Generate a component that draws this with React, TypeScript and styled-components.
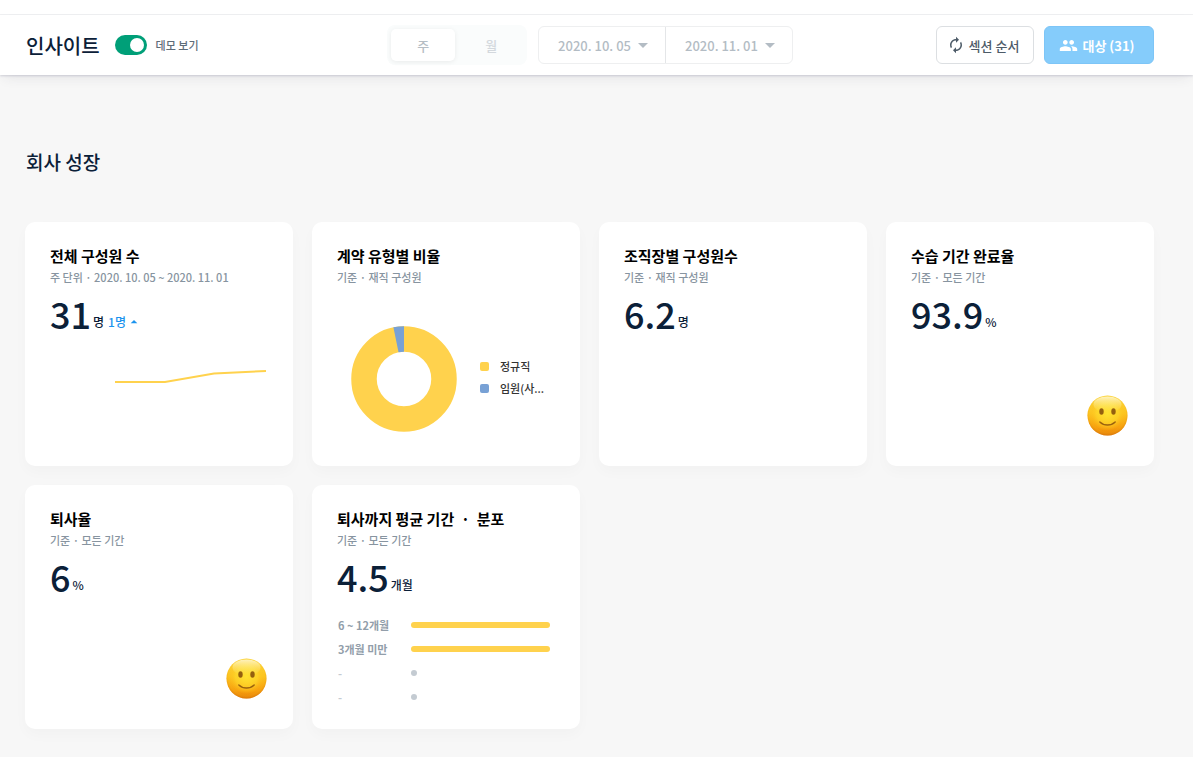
import React from 'react';
import styled, { createGlobalStyle } from 'styled-components';
import { MdArrowDropDown, MdArrowDropUp, MdAutorenew, MdPeople } from 'react-icons/md';

const GlobalStyle = createGlobalStyle`
  *, *::before, *::after { box-sizing: border-box; }
  html { background: #f7f7f7; }
  body {
    margin: 0;
    color: #0b2038;
    font-family: 'Noto Sans CJK KR', 'Noto Sans', sans-serif;
    font-weight: 500;
  }
  button { font: inherit; cursor: pointer; }
  h1, h2, h3, p, ul, dl, dd { margin: 0; padding: 0; font-weight: 500; }
`;

const TopStrip = styled.div`
  height: 15px;
  background: #fff;
  border-bottom: 1px solid #f1f2f3;
`;

const Header = styled.header`
  display: grid;
  grid-template-columns: 1fr auto 1fr;
  align-items: center;
  height: 60px;
  padding: 0 39px 0 26px;
  background: #fff;
  box-shadow: 0 1px 2px rgba(50, 50, 93, 0.18), 0 6px 12px -4px rgba(50, 50, 70, 0.1);
`;

const HeaderStart = styled.div`
  display: flex;
  align-items: center;
  gap: 15px;
`;

const PageTitle = styled.h1`
  padding-top: 2px;
  font-size: 20px;
  line-height: 30px;
`;

const SwitchLabel = styled.label`
  display: flex;
  align-items: center;
  gap: 9px;
  color: #5f6c78;
  font-size: 11px;
  line-height: 16px;
  cursor: pointer;
`;

const Switch = styled.input`
  appearance: none;
  display: flex;
  justify-content: flex-end;
  align-items: center;
  width: 32px;
  height: 20px;
  margin: 0;
  padding: 0 3px;
  border-radius: 10px;
  background: #009f78;

  &::before {
    content: '';
    width: 14px;
    height: 14px;
    border-radius: 50%;
    background: #fff;
  }

  &:not(:checked) {
    justify-content: flex-start;
    background: #c3cad1;
  }
`;

const Filters = styled.div`
  display: flex;
  align-items: center;
  gap: 11px;
`;

const Segments = styled.div`
  display: flex;
  gap: 4px;
  padding: 4px;
  border-radius: 8px;
  background: #fafcfc;
`;

const Segment = styled.button<{ $active?: boolean }>`
  width: 64px;
  height: 32px;
  padding: 0;
  border: 0;
  border-radius: 5px;
  background: ${(p) => (p.$active ? '#fff' : 'transparent')};
  box-shadow: ${(p) => (p.$active ? '0 1px 5px rgba(0, 0, 0, 0.07)' : 'none')};
  color: ${(p) => (p.$active ? '#b5bdc4' : '#d3d8dd')};
  font-size: 13px;
`;

const DateRange = styled.div`
  display: flex;
  height: 38px;
  border: 1px solid #eeeff0;
  border-radius: 6px;
`;

const DateButton = styled.button`
  display: flex;
  align-items: center;
  padding: 0 10px 0 19px;
  border: 0;
  background: none;
  color: #b3bcc4;
  font-size: 13px;

  & + & { border-left: 1px solid #e4e6e8; }
`;

const HeaderEnd = styled.div`
  display: flex;
  justify-content: flex-end;
  gap: 10px;
`;

const ActionButton = styled.button<{ $primary?: boolean }>`
  display: flex;
  align-items: center;
  justify-content: center;
  gap: 4px;
  width: ${(p) => (p.$primary ? 110 : 98)}px;
  height: 38px;
  padding: 0 4px 0 0;
  border: 1px solid ${(p) => (p.$primary ? '#7dc5f7' : '#dcdfe2')};
  border-radius: 6px;
  background: ${(p) => (p.$primary ? '#85ccfb' : '#fff')};
  color: ${(p) => (p.$primary ? '#fff' : '#4d5b68')};
  font-size: 13px;
  font-weight: ${(p) => (p.$primary ? 700 : 500)};
`;

const Main = styled.main`
  padding: 72px 39px 28px 25px;
`;

const SectionTitle = styled.h2`
  margin-bottom: 45px;
  padding-left: 1px;
  font-size: 19px;
  line-height: 30px;
`;

const CardGrid = styled.div`
  display: grid;
  grid-template-columns: repeat(4, minmax(0, 1fr));
  gap: 19px;
`;

const CardBox = styled.article`
  display: flex;
  flex-direction: column;
  min-height: 244px;
  padding: 24px 24px 24px 25px;
  border-radius: 10px;
  background: #fff;
  box-shadow: 0 6px 14px rgba(0, 0, 0, 0.025);
`;

const CardTitle = styled.h3`
  color: #000;
  font-size: 15px;
  font-weight: 700;
  line-height: 20px;
  white-space: pre;
`;

const CardCaption = styled.p`
  margin-top: 3px;
  color: #8794a0;
  font-size: 11px;
  line-height: 16px;
`;

const Figure = styled.p`
  display: flex;
  align-items: flex-end;
  margin-top: 8px;
  font-size: 36px;
  line-height: 40px;
`;

const Unit = styled.span`
  margin-left: 2px;
  padding-bottom: 3px;
  font-size: 12px;
  line-height: 16px;
`;

const Delta = styled.span`
  display: inline-flex;
  align-items: center;
  margin-left: 4px;
  padding-bottom: 3px;
  color: #1b93ee;
  font-size: 12px;
  line-height: 16px;
`;

const TrendChart = styled.svg`
  align-self: flex-end;
  width: 156px;
  height: 24px;
  margin-top: 33px;
`;

const DonutRow = styled.div`
  display: flex;
  align-items: center;
  gap: 23px;
  margin-top: 41px;
  padding-left: 14px;
`;

const Legend = styled.ul`
  flex: 1;
  min-width: 0;
  padding-bottom: 4px;
  list-style: none;
`;

const LegendItem = styled.li<{ $color: string }>`
  display: flex;
  align-items: center;
  gap: 11px;
  color: #333;
  font-size: 11px;
  line-height: 22px;

  &::before {
    content: '';
    flex: none;
    width: 9px;
    height: 9px;
    border-radius: 2px;
    background: ${(p) => p.$color};
  }
`;

const FaceSlot = styled.div`
  display: flex;
  justify-content: flex-end;
  margin-top: auto;
  padding: 0 2px 6px 0;
`;

const Distribution = styled.dl`
  display: flex;
  flex-direction: column;
  gap: 8px;
  margin-top: 21px;
  padding: 0 6px 0 1px;
`;

const DistributionRow = styled.div<{ $empty: boolean }>`
  display: grid;
  grid-template-columns: 73px 1fr;
  align-items: center;
  color: ${(p) => (p.$empty ? '#c4cbd2' : '#929eaa')};
  font-size: 11px;
  font-weight: 700;
  line-height: 16px;
`;

const Bar = styled.dd<{ $empty: boolean }>`
  width: ${(p) => (p.$empty ? '6px' : '100%')};
  height: 6px;
  border-radius: 3px;
  background: ${(p) => (p.$empty ? '#c4cbd2' : '#ffd24d')};
`;

function SmilingFace({ id }: { id: string }) {
  return (
    <svg width="41" height="41" viewBox="0 0 41 41" role="img" aria-label="좋음">
      <defs>
        <linearGradient id={`${id}-base`} x1="0" y1="0" x2="0" y2="1">
          <stop offset="0" stopColor="#fbd53c" />
          <stop offset="0.45" stopColor="#fcc41f" />
          <stop offset="0.8" stopColor="#f7a00e" />
          <stop offset="1" stopColor="#e67f08" />
        </linearGradient>
        <radialGradient id={`${id}-glow`} cx="0.5" cy="0.45" r="0.55">
          <stop offset="0" stopColor="#ffe432" stopOpacity="0.95" />
          <stop offset="0.5" stopColor="#ffdc2d" stopOpacity="0.6" />
          <stop offset="0.8" stopColor="#ffbf1b" stopOpacity="0" />
          <stop offset="1" stopColor="#d27008" stopOpacity="0.6" />
        </radialGradient>
        <linearGradient id={`${id}-shine`} x1="0" y1="0" x2="0" y2="1">
          <stop offset="0" stopColor="#fff8d8" stopOpacity="0.85" />
          <stop offset="1" stopColor="#fff176" stopOpacity="0" />
        </linearGradient>
      </defs>
      <circle cx="20.500" cy="20.500" r="20" fill={`url(#${id}-base)`} />
      <circle cx="20.500" cy="20.500" r="20" fill={`url(#${id}-glow)`} />
      <ellipse cx="20.500" cy="9.500" rx="14" ry="8" fill={`url(#${id}-shine)`} />
      <ellipse cx="14.500" cy="16.500" rx="2.200" ry="3.300" fill="#94600f" />
      <ellipse cx="26.500" cy="16.500" rx="2.200" ry="3.300" fill="#94600f" />
      <path d="M12.800 27C17 31 24 31 28.200 27" fill="none" stroke="#9a620f" strokeWidth="1.400" strokeLinecap="round" />
    </svg>
  );
}

function Donut() {
  return (
    <svg width="106" height="106" viewBox="0 0 106 106" role="img" aria-label="계약 유형별 비율">
      <circle cx="53" cy="53" r="40" fill="none" stroke="#ffd24d" strokeWidth="25.500" />
      <circle
        cx="53"
        cy="53"
        r="40"
        fill="none"
        stroke="#78a1d5"
        strokeWidth="25.500"
        pathLength="31"
        strokeDasharray="1 30"
        strokeDashoffset="1"
        transform="rotate(-90 53 53)"
      />
    </svg>
  );
}

interface CardProps {
  title: string;
  caption: string;
  value?: string;
  unit?: string;
  delta?: string;
  children?: React.ReactNode;
}

function Card({ title, caption, value, unit, delta, children }: CardProps) {
  return (
    <CardBox>
      <CardTitle>{title}</CardTitle>
      <CardCaption>{caption}</CardCaption>
      {value && (
        <Figure>
          {value}
          <Unit>{unit}</Unit>
          {delta && (
            <Delta>
              {delta}
              <MdArrowDropUp size={16} />
            </Delta>
          )}
        </Figure>
      )}
      {children}
    </CardBox>
  );
}

const distribution = ['6 ~ 12개월', '3개월 미만', '-', '-'];

export default function App() {
  return (
    <>
      <GlobalStyle />
      <TopStrip />
      <Header>
        <HeaderStart>
          <PageTitle>인사이트</PageTitle>
          <SwitchLabel>
            <Switch type="checkbox" role="switch" defaultChecked />
            데모 보기
          </SwitchLabel>
        </HeaderStart>
        <Filters>
          <Segments>
            <Segment type="button" $active aria-pressed="true">주</Segment>
            <Segment type="button" aria-pressed="false">월</Segment>
          </Segments>
          <DateRange>
            <DateButton type="button" aria-haspopup="dialog">
              2020. 10. 05
              <MdArrowDropDown size={24} />
            </DateButton>
            <DateButton type="button" aria-haspopup="dialog">
              2020. 11. 01
              <MdArrowDropDown size={24} />
            </DateButton>
          </DateRange>
        </Filters>
        <HeaderEnd>
          <ActionButton type="button">
            <MdAutorenew size={18} />
            섹션 순서
          </ActionButton>
          <ActionButton type="button" $primary>
            <MdPeople size={19} />
            대상 (31)
          </ActionButton>
        </HeaderEnd>
      </Header>
      <Main>
        <SectionTitle>회사 성장</SectionTitle>
        <CardGrid>
          <Card title="전체 구성원 수" caption="주 단위 · 2020. 10. 05 ~ 2020. 11. 01" value="31" unit="명" delta="1명">
            <TrendChart viewBox="0 0 156 24" role="img" aria-label="구성원 수 추이">
              <polyline points="2,16 52,16 101,7.500 153,5" fill="none" stroke="#ffd24d" strokeWidth="2" />
            </TrendChart>
          </Card>
          <Card title="계약 유형별 비율" caption="기준 · 재직 구성원">
            <DonutRow>
              <Donut />
              <Legend>
                <LegendItem $color="#ffd24d">정규직</LegendItem>
                <LegendItem $color="#78a1d5">임원(사...</LegendItem>
              </Legend>
            </DonutRow>
          </Card>
          <Card title="조직장별 구성원수" caption="기준 · 재직 구성원" value="6.2" unit="명" />
          <Card title="수습 기간 완료율" caption="기준 · 모든 기간" value="93.9" unit="%">
            <FaceSlot>
              <SmilingFace id="probation" />
            </FaceSlot>
          </Card>
          <Card title="퇴사율" caption="기준 · 모든 기간" value="6" unit="%">
            <FaceSlot>
              <SmilingFace id="turnover" />
            </FaceSlot>
          </Card>
          <Card title="퇴사까지 평균 기간  ·  분포" caption="기준 · 모든 기간" value="4.5" unit="개월">
            <Distribution>
              {distribution.map((label, index) => (
                <DistributionRow key={index} $empty={label === '-'}>
                  <dt>{label}</dt>
                  <Bar $empty={label === '-'} />
                </DistributionRow>
              ))}
            </Distribution>
          </Card>
        </CardGrid>
      </Main>
    </>
  );
}
